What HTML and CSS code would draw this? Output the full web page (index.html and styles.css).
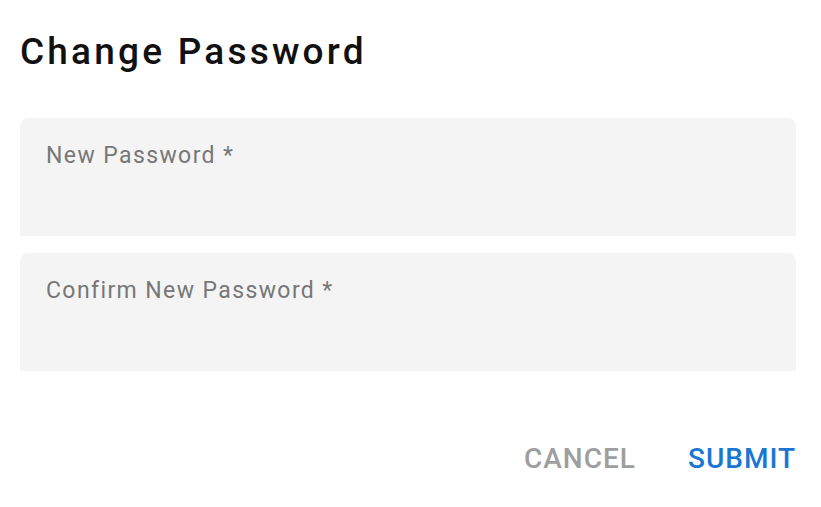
FILE: index.html
```html
<!DOCTYPE html>
<html lang="en">
<head>
<meta charset="utf-8">
<title>Change Password</title>
<link rel="stylesheet" href="styles.css">
</head>
<body>
<div class="dialog">
  <h2 class="title">Change Password</h2>
  <div class="fields">
    <div class="field"><label class="label">New Password *</label></div>
    <div class="field"><label class="label">Confirm New Password *</label></div>
  </div>
  <div class="actions">
    <button class="btn cancel">Cancel</button>
    <button class="btn submit">Submit</button>
  </div>
</div>
</body>
</html>
```
FILE: styles.css
```css
html, body {
  margin: 0;
  padding: 0;
  background: #ffffff;
}
body {
  font-family: Roboto, "Liberation Sans", sans-serif;
  width: 821px;
  height: 507px;
  overflow: hidden;
}
.dialog {
  padding: 0 25px 0 20px;
}
.title {
  margin: 0;
  padding-top: 29px;
  height: 90px;
  box-sizing: border-box;
  font-size: 37px;
  line-height: 46px;
  font-weight: 500;
  color: #111;
  letter-spacing: 3.2px;
}
.fields {
  display: flex;
  flex-direction: column;
  gap: 17px;
  margin-top: 28px;
}
.field {
  background: #f4f4f4;
  border-radius: 8px 8px 0 0;
  height: 118px;
  padding: 23px 26px 0;
  box-sizing: border-box;
}
.label {
  font-size: 23px;
  line-height: 30px;
  color: #777777;
  letter-spacing: 1.4px;
}
.actions {
  display: flex;
  justify-content: flex-end;
  gap: 52px;
  margin-top: 70px;
}
.btn {
  background: none;
  border: none;
  padding: 0;
  font-family: inherit;
  font-size: 28px;
  font-weight: 500;
  text-transform: uppercase;
  line-height: 36px;
  letter-spacing: 1px;
}
.cancel { color: #9e9e9e; }
.submit { color: #1976d2; }
```
